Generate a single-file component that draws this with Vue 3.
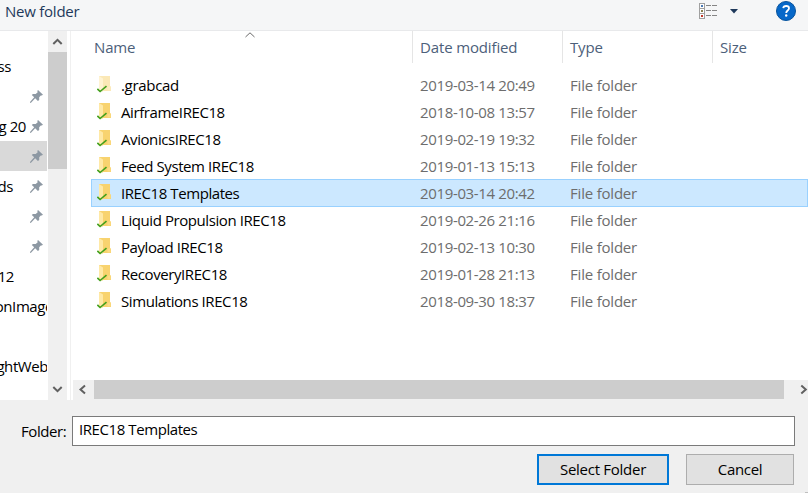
<script setup>
const places = [
  { text: 'ss', right: 11 },
  { pin: true },
  { text: 'g 20', right: 26, pin: true },
  { pin: true, active: true },
  { text: 'ds', right: 13, pin: true },
  { pin: true },
  { pin: true },
  { text: '12', right: 14 },
  { text: 'onImage', right: 53 },
  {},
  { text: 'ghtWeb', right: 48 },
]

const folders = [
  { name: '.grabcad', date: '2019-03-14 20:49', hidden: true },
  { name: 'AirframeIREC18', date: '2018-10-08 13:57' },
  { name: 'AvionicsIREC18', date: '2019-02-19 19:32' },
  { name: 'Feed System IREC18', date: '2019-01-13 15:13' },
  { name: 'IREC18 Templates', date: '2019-03-14 20:42', selected: true },
  { name: 'Liquid Propulsion IREC18', date: '2019-02-26 21:16' },
  { name: 'Payload IREC18', date: '2019-02-13 10:30' },
  { name: 'RecoveryIREC18', date: '2019-01-28 21:13' },
  { name: 'Simulations IREC18', date: '2018-09-30 18:37' },
]
</script>

<template>
  <div class="dialog">
    <header class="toolbar">
      <span class="new-folder">New folder</span>
      <div class="tools">
        <svg class="view-icon" width="20" height="18" viewBox="0 0 20 18">
          <g fill="#fff" stroke="#a0a0a0">
            <rect x="1.5" y="1.5" width="5" height="5" />
            <rect x="1.5" y="6.500" width="5" height="5" />
            <rect x="1.5" y="11.500" width="5" height="5" />
          </g>
          <path d="M3 3h2v2h-2z" fill="#4a7ab5" />
          <path d="M3 8h2v2h-2z" fill="#8a8350" />
          <path d="M3 13h2v2h-2z" fill="#c03a2b" />
          <path d="M8 3.500h5M14 3.500h5M8 8.500h5M14 8.500h5M8 13.500h5M14 13.500h5" stroke="#858585" />
        </svg>
        <svg class="drop-icon" width="8" height="5" viewBox="0 0 8 5"><path d="M0 0h8L4 4.500z" fill="#1e395b" /></svg>
        <svg class="help-icon" width="20" height="20" viewBox="0 0 20 20">
          <circle cx="10" cy="10" r="9.500" fill="#0668c9" stroke="#07539d" />
          <path d="M7.200 7.200C7.500 4.300 13 4.200 13 7.300c0 2.200-2.800 2.300-2.800 4.700" fill="none" stroke="#fff" stroke-width="1.800" />
          <circle cx="10.200" cy="14.500" r="1.200" fill="#fff" />
        </svg>
      </div>
    </header>

    <main class="body">
      <nav class="places">
        <div v-for="(p, i) in places" :key="i" class="place" :class="{ active: p.active }">
          <span v-if="p.text" class="place-name" :style="{ width: p.right + 'px' }">{{ p.text }}</span>
          <svg v-if="p.pin" class="pin" width="13" height="13" viewBox="0 0 13 13">
            <path d="M8 0L13 4.800L11.700 5.600L10.800 5.400L9.200 7.200L9.200 10L7.900 10.900L5.200 8.300L1 12.700L0 12.900L0.200 11.800L4.200 7.300L1.800 5L2.900 3.900L5.700 4L7.700 2.300L7.300 1z" fill="#8d98a3" />
          </svg>
        </div>
      </nav>
      <div class="vbar">
        <svg width="19" height="21" viewBox="0 0 19 21"><path d="M5.300 13L9.500 8.800L13.700 13" /></svg>
        <div class="vthumb"></div>
        <svg class="vdown" width="19" height="21" viewBox="0 0 19 21"><path d="M5.300 8L9.500 12.200L13.700 8" /></svg>
      </div>
      <div class="splitter"></div>
      <section class="files">
        <div class="head">
          <span class="col name-col">Name
            <svg class="sort" width="10" height="6" viewBox="0 0 10 6"><path d="M.5 5L5 .8L9.500 5" fill="none" stroke="#6a6a6a" /></svg>
          </span>
          <span class="col date-col">Date modified</span>
          <span class="col type-col">Type</span>
          <span class="col size-col">Size</span>
        </div>
        <div class="rows">
          <div v-for="f in folders" :key="f.name" class="row" :class="{ selected: f.selected }">
            <span class="cell-name">
              <svg class="folder" width="15" height="18" viewBox="0 0 15 18">
                <g :opacity="f.hidden ? 0.5 : 1">
                  <path d="M2 1h11v10.500h1V16H4L2 15z" fill="#f8d36f" />
                  <path d="M2 1l4 2.500V17l-4-1.500z" fill="#ffe9a6" />
                  <path d="M10.500 15.500V12l3-1v4.500z" fill="#fbdc85" />
                </g>
                <path d="M.4 13.900L3.100 16.500L9.500 11.200" fill="none" stroke="#43a01c" stroke-width="1.600" />
              </svg>
              <span class="fname" :class="{ loose: f.hidden }">{{ f.name }}</span>
            </span>
            <span class="cell-date">{{ f.date }}</span>
            <span class="cell-type">File folder</span>
          </div>
        </div>
        <div class="hbar">
          <svg width="21" height="20" viewBox="0 0 21 20"><path d="M12 5.500L7.500 9.500L12 13.500" /></svg>
          <div class="hthumb"></div>
          <svg class="hright" width="24" height="20" viewBox="0 0 24 20"><path d="M17.300 5.500L21.800 9.500L17.300 13.500" /></svg>
        </div>
      </section>
    </main>

    <footer class="footer">
      <div class="field">
        <label for="folder">Folder:</label>
        <div id="folder" class="input"><span>IREC18 Templates</span></div>
      </div>
      <div class="buttons">
        <button class="btn primary"><span>Select Folder</span></button>
        <button class="btn"><span>Cancel</span></button>
      </div>
      <i class="grip"></i>
    </footer>
  </div>
</template>

<style>
body { margin: 0; overflow: hidden; }
</style>

<style scoped>
.dialog {
  width: 808px;
  height: 493px;
  display: flex;
  flex-direction: column;
  overflow: hidden;
  background: #fff;
  color: #000;
  font-family: "Open Sans", "Noto Sans", sans-serif;
  font-size: 15px;
  letter-spacing: -0.42px;
  line-height: 20px;
  white-space: nowrap;
}
.toolbar {
  box-sizing: border-box;
  height: 31px;
  flex: none;
  display: flex;
  justify-content: space-between;
  padding: 1px 12px 0 5px;
  background: #f5f6f7;
  border-bottom: 1px solid #e8e9eb;
  color: #1e395b;
}
.new-folder { letter-spacing: -0.24px; }
.tools { display: flex; align-items: flex-start; }
.view-icon { margin: 1px 12px 0 0; }
.drop-icon { margin: 8px 38px 0 0; }
.help-icon { margin-top: 0; }
.body { display: flex; height: 369px; flex: none; }
.places { width: 48px; padding-top: 21px; box-sizing: border-box; overflow: hidden; }
.place { height: 30px; width: 47px; flex: none; display: flex; align-items: center; overflow: hidden; }
.place.active { background: #d9d9d9; margin-top: -1px; margin-bottom: 1px; }
.place-name { flex: none; display: flex; justify-content: flex-end; margin-top: -2px; }
.pin { flex: none; margin: -1px 4px 0 auto; }
.place.active .pin { margin-top: 1px; }
.vbar { width: 19px; margin-right: 3px; background: #f0f0f0; display: flex; flex-direction: column; }
.vbar path, .hbar path { fill: none; stroke: #606060; stroke-width: 2; }
.vthumb { height: 117px; background: #cdcdcd; }
.vdown { margin-top: auto; }
.splitter { width: 1px; margin-right: 2px; background: #f0f0f0; }
.files { flex: 1; display: flex; flex-direction: column; }
.head { display: flex; height: 32px; color: #4c607a; }
.col { box-sizing: border-box; padding: 6px 0 0 7px; border-right: 1px solid #e5e5e5; position: relative; letter-spacing: -0.14px; }
.name-col { width: 340px; padding-left: 21px; }
.sort { position: absolute; left: 171.5px; top: 1px; }
.date-col, .type-col { width: 150px; }
.size-col { border: 0; }
.rows { padding: 9px 0 0 18px; }
.row { box-sizing: border-box; height: 27px; display: flex; align-items: center; padding: 0 0 2px 6px; color: #6d6d6d; }
.row.selected { height: 28px; margin: -1px 0 0; padding: 0 0 1px 5px; border: 1px solid #99d1ff; background: #cce8ff; }
.cell-name { display: flex; align-items: center; width: 323px; color: #000; }
.folder { flex: none; margin: -1px 9px 0 0; }
.loose { letter-spacing: -0.32px; }
.cell-date { width: 150px; letter-spacing: -0.35px; }
.cell-type { letter-spacing: -0.2px; }
.hbar { margin-top: auto; height: 20px; background: #f0f0f0; display: flex; }
.hthumb { width: 690px; height: 19px; background: #cdcdcd; }
.footer { flex: 1; background: #f0f0f0; padding: 16px 13px 0 21px; position: relative; }
.field { display: flex; align-items: center; }
.field label { width: 51px; letter-spacing: -0.42px; }
.input { box-sizing: border-box; width: 723px; height: 30px; border: 1px solid #7a7a7a; background: #fff; padding: 2px 6px; }
.buttons { display: flex; justify-content: flex-end; gap: 17px; padding: 8px 1px 0 0; }
.btn { box-sizing: border-box; width: 108px; height: 31px; border: 1px solid #adadad; background: #e1e1e1; font: inherit; letter-spacing: -0.34px; color: #000; padding: 0 0 2px; }
.btn.primary { width: 132px; border: 2px solid #0078d7; letter-spacing: -0.27px; }
.grip { position: absolute; right: 0; bottom: 0; width: 3px; height: 1px; background: #bfbfbf; }
</style>
